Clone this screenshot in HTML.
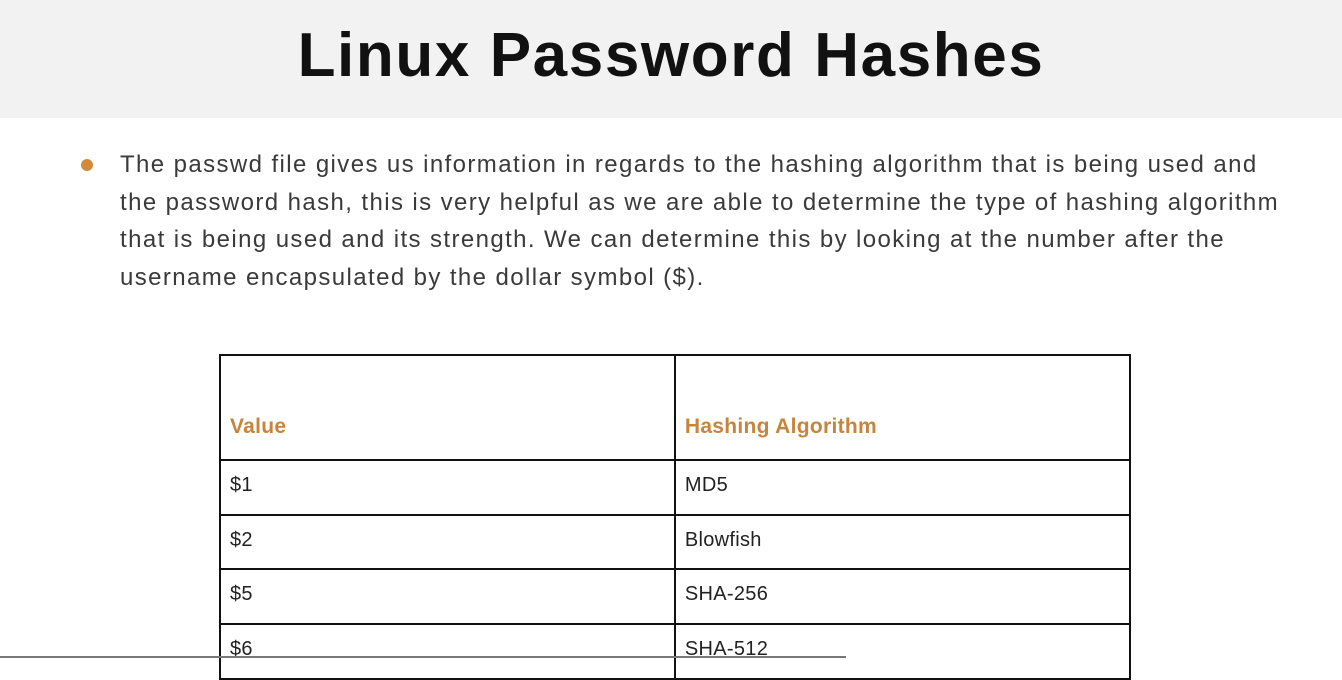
<!DOCTYPE html>
<html><head><style>
body{margin:0;width:1342px;height:659px;overflow:hidden;background:#fff;font-family:"Liberation Sans",sans-serif;position:relative}
.hdr{position:absolute;left:0;top:0;width:1342px;height:118px;background:#f2f2f2}
.hdr h1{margin:0;text-align:center;font-size:62px;font-weight:bold;color:#111;line-height:112px;letter-spacing:1.6px}
.dot{position:absolute;left:81px;top:159px;width:12px;height:12px;border-radius:50%;background:#d08a3c}
.txt{position:absolute;left:120px;top:146px;width:1220px;font-size:24px;line-height:37.7px;color:#3a3a3a;letter-spacing:1.4px;white-space:nowrap}
table{position:absolute;left:219px;top:354px;border-collapse:collapse;width:912px}
td{border:2px solid #111;font-size:20px;color:#222;padding:0 9px;vertical-align:middle;width:437px;letter-spacing:0.3px}
tr.h td{height:83px;color:#c8843c;font-weight:bold;font-size:21px;vertical-align:bottom;padding-bottom:20px}
tr.r td{height:48.7px;padding-bottom:4px}
.line{position:absolute;left:0;top:656px;width:846px;height:2px;background:#777}
</style></head><body>
<div class="hdr"><h1>Linux Password Hashes</h1></div>
<div class="dot"></div>
<div class="txt">The passwd file gives us information in regards to the hashing algorithm that is being used and<br>the password hash, this is very helpful as we are able to determine the type of hashing algorithm<br>that is being used and its strength. We can determine this by looking at the number after the<br>username encapsulated by the dollar symbol ($).</div>
<table>
<tr class="h"><td>Value</td><td>Hashing Algorithm</td></tr>
<tr class="r"><td>$1</td><td>MD5</td></tr>
<tr class="r"><td>$2</td><td>Blowfish</td></tr>
<tr class="r"><td>$5</td><td>SHA-256</td></tr>
<tr class="r"><td>$6</td><td>SHA-512</td></tr>
</table>
<div class="line"></div>
</body></html>
